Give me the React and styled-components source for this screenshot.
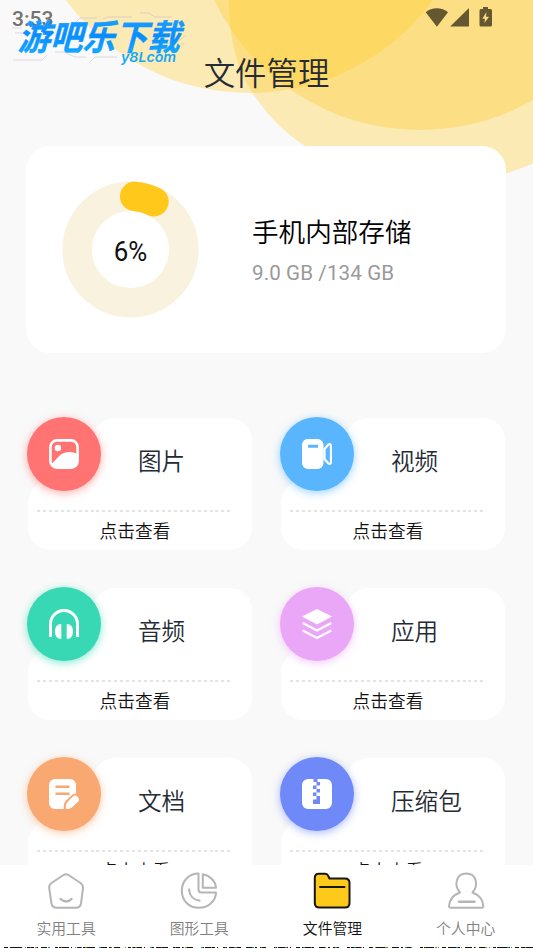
import React from "react";
import styled, { createGlobalStyle } from "styled-components";

const Global = createGlobalStyle`
  * { box-sizing: border-box; }
  body { margin: 0; background: #f9f9f9; }
`;

const cjk = `"Noto Sans CJK SC", "Noto Sans", sans-serif`;

const Screen = styled.div`
  position: relative;
  width: 533px;
  height: 948px;
  display: flex;
  flex-direction: column;
  overflow: hidden;
  background: #f9f9f9;
  font-family: Roboto, ${cjk};
`;

const Backdrop = styled.svg`
  position: absolute;
  top: 0;
  left: 0;
`;

const StatusBar = styled.header`
  position: relative;
  height: 36px;
  flex: none;
  display: flex;
  justify-content: space-between;
  padding: 0 40px 0 12px;
`;

const Clock = styled.span`
  font-size: 21px;
  font-weight: 500;
  line-height: 38px;
  color: #747371;
`;

const Watermark = styled.svg`
  position: absolute;
  top: 0;
  left: 0;
`;

const Title = styled.h1`
  position: relative;
  margin: 0;
  height: 110px;
  flex: none;
  font: 350 31.4px/72px ${cjk};
  text-align: center;
  color: #252b35;
`;

const StorageCard = styled.section`
  position: relative;
  flex: none;
  display: flex;
  align-items: flex-start;
  margin: 0 27px 0 26px;
  height: 207px;
  padding: 35px 0 0 35.5px;
  border-radius: 24px;
  background: #fff;
`;

const StorageText = styled.div`
  display: flex;
  flex-direction: column;
  padding: 30px 0 0 53.5px;
`;

const StorageName = styled.span`
  font: 350 26.6px/40px ${cjk};
  color: #000;
`;

const StorageSize = styled.span`
  font-size: 20.6px;
  line-height: 44px;
  letter-spacing: 0.1px;
  color: #999;
`;

const Scroll = styled.main`
  position: relative;
  flex: 1;
  min-height: 0;
  overflow: hidden;
`;

const Categories = styled.div`
  display: grid;
  grid-template-columns: 225px 225px;
  column-gap: 28px;
  row-gap: 37px;
  padding: 64px 0 0 27px;
`;

const Category = styled.article`
  position: relative;
  height: 133px;
  padding: 1px 0 0 1px;
`;

const CardHead = styled.div`
  height: 62px;
  margin-left: 65px;
  padding-left: 45px;
  border-radius: 22px 22px 0 0;
  background: #fff;
  font: 350 23.6px/85px ${cjk};
  color: #252b35;
`;

const CardBody = styled.div`
  height: 70px;
  padding: 29.5px 21px 0 9px;
  border-radius: 23px 0 22px 22px;
  background: #fff;
`;

const Dots = styled.div`
  height: 2px;
  background: repeating-linear-gradient(90deg, #e4e4e4 0 3px, transparent 3px 5.95px);
`;

const Hint = styled.div`
  padding-left: 2px;
  font: 350 17.7px/37px ${cjk};
  text-align: center;
  color: #111;
`;

const Disc = styled.div`
  position: absolute;
  left: -0.3px;
  top: 0;
  width: 74px;
  height: 74px;
  display: grid;
  place-items: center;
  border-radius: 50%;
  background: ${(p) => p.$color};
  box-shadow: 0 2px 8px ${(p) => p.$color}99;
`;

const Nav = styled.nav`
  position: relative;
  flex: none;
  height: 83px;
  display: grid;
  grid-template-columns: repeat(4, 133.2px);
  background: #fff;
`;

const NavItem = styled.div`
  display: flex;
  flex-direction: column;
  align-items: center;
  padding: 7px 1px 0 0;
  font: 350 14.8px/22px ${cjk};
  color: ${(p) => (p.$active ? "#111" : "#808080")};
  svg { display: block; margin-bottom: 7px; }
`;

const StaticEdge = styled.svg`
  position: absolute;
  left: 0;
  bottom: 0;
`;

const W = "#fff";

const categories = [
  {
    name: "图片",
    color: "#ff7472",
    icon: (
      <>
        <rect x="1.4" y="1.4" width="27.2" height="27.2" rx="6.5" fill="none" stroke={W} strokeWidth="2.6" />
        <circle cx="8.9" cy="9" r="3.2" fill={W} />
        <path d="M2.5 25C7 22 10 13 20 13C24 13 27 14 29 15.5V23C29 27 27 29 22 29H8C4.500 29 2.500 28 2.500 25Z" fill={W} />
      </>
    ),
  },
  {
    name: "视频",
    color: "#59b6fe",
    icon: (
      <>
        <path d="M7 0H15.500A6 6 0 0 1 21.500 6V24A6 6 0 0 1 15.500 30H6A6 6 0 0 1 0 24V6A6 6 0 0 1 7 0Z" fill={W} />
        <rect x="6" y="5.800" width="10" height="3" rx=".6" fill="#59b6fe" />
        <path d="M22.500 10L26 6C27.500 4.500 29 5 29 7V23C29 25 27.500 25.500 26 24L22.500 20Z" fill="none" stroke={W} strokeWidth="2.2" />
      </>
    ),
  },
  {
    name: "音频",
    color: "#37d8b3",
    icon: (
      <>
        <path d="M1.500 28V15A13.500 13.500 0 0 1 28.500 15V28" fill="none" stroke={W} strokeWidth="3" />
        <path d="M12.300 15V30C8 30 6 27 6 22.500C6 18 8 15 12.300 15ZM17.700 15V30C22 30 24 27 24 22.500C24 18 22 15 17.700 15Z" fill={W} />
      </>
    ),
  },
  {
    name: "应用",
    color: "#eaa7f8",
    icon: (
      <>
        <path d="M15 0L30 7.500L15 15.500L0 7.500Z" fill={W} />
        <path d="M.7 14L15 21.500L29.300 14M.7 21.500L15 29L29.300 21.500" fill="none" stroke={W} strokeWidth="2.2" />
      </>
    ),
  },
  {
    name: "文档",
    color: "#f9a872",
    icon: (
      <>
        <rect width="27" height="30" rx="6" fill={W} />
        <path d="M6.500 7.700H20.500M6.500 14.700H20.500" stroke="#f9a872" strokeWidth="2.4" />
        <path d="M14.800 31C14.500 26 15 23.500 17 21.500L23.500 15.500Q25 14.500 28 14.500V31Z" fill="#f9a872" />
        <path d="M17 30C16.500 27 17 24.500 19 22.500L23.500 18C25.500 16 27 16.200 28.500 17.800C30.500 20 30.500 21.500 28.800 23L24 27.500C22 29.500 20 30 17 30Z" fill={W} />
      </>
    ),
  },
  {
    name: "压缩包",
    color: "#6f89f8",
    icon: (
      <>
        <path d="M6 0H11.500V3H15.500V0H24A6 6 0 0 1 30 6V24A6 6 0 0 1 24 30H6A6 6 0 0 1 0 24V6A6 6 0 0 1 6 0Z" fill={W} />
        <path d="M14.500 3H18V6.500H14.500ZM11 6.500H14.500V10H11ZM14.500 10H18V13.500H14.500ZM11 13.500H14.500V17H11ZM14.500 17H18V25H11V20.500H14.500Z" fill="#6f89f8" />
      </>
    ),
  },
];

const navItems = [
  {
    name: "实用工具",
    icon: (
      <>
        <path d="M16.500 3Q19 1.600 21.500 3L33.500 11Q36.300 13 36 16L34 31.500Q33.300 35.700 29 35.700H9.500Q5.300 35.700 4.500 31.500L2.200 16Q1.800 13 4.500 11Z" />
        <path d="M13.500 27C17 30.300 21.500 30.300 24.500 27" strokeWidth="2.4" />
      </>
    ),
  },
  {
    name: "图形工具",
    icon: (
      <>
        <path d="M18.500 1.500C9 1.500 1.800 9 1.800 18.700C1.800 28.500 9 35.800 18.800 35.800C28.500 35.800 36 28.500 36 20.500H21.500Q18.500 20.500 18.500 17.500Z" />
        <path d="M22.800 2.300C30 3.500 35.500 9 36 15.800H22.800Z" />
        <path d="M9 17.500C9.500 23.500 13.500 28 19.500 28.700" strokeWidth="2.200" />
      </>
    ),
  },
  {
    name: "文件管理",
    active: true,
    icon: (
      <>
        <path d="M1.800 6Q1.800 1.700 5.800 1.700H12Q14 1.700 15 3.500L16.500 6.500H32Q36.500 6.500 36.500 11V31Q36.500 35.500 32 35.500H6.500Q1.800 35.500 1.800 31Z" fill="#ffc91a" />
        <path d="M7 15H31.500" />
      </>
    ),
  },
  {
    name: "个人中心",
    icon: (
      <>
        <path d="M13 20.500C6 23 2.500 28 2 34Q1.900 35.700 4 35.700H34.500Q36.500 35.700 36.300 34C36 28 32 23 25.500 20.500C31.500 14 30 1.500 19.300 1.500C8.500 1.500 7 14 13 20.500Z" />
        <path d="M12 29.700H27.500" strokeWidth="2.400" />
      </>
    ),
  },
];

const StatusIcons = () => (
  <svg width="68" height="30" fill="#65572f">
    <path d="M.7 12.300C6.500 6.800 17 6.800 23 12.300L11.900 26.700Z" />
    <path d="M25.200 26.500L44 8V26.500Z" />
    <path d="M58 7H63V9H65.500Q67 9 67 10.500V25Q67 26.500 65.500 26.500H56Q54.500 26.500 54.500 25V10.500Q54.500 9 56 9H58Z" />
    <path d="M61.500 12L57.300 18.700H60L59.500 23L64 16.800H61Z" fill="#fbdd83" />
  </svg>
);

const Brand = () => (
  <Watermark width="200" height="72">
    <defs>
      <linearGradient id="brand" x1="0" y1="0" x2="0" y2="1">
        <stop offset="0" stopColor="#25adff" />
        <stop offset=".5" stopColor="#088cff" />
        <stop offset="1" stopColor="#13b8ff" />
      </linearGradient>
    </defs>
    <g fill="none" stroke="#b9b5cd" strokeOpacity=".7" strokeWidth=".7">
      <path d="M76 22L80 18H97M103 19L107 17H132M140 13H149L155 17H172M13 60H42L47 55M55 52H64L75 57H86M22 28H12M15 33H26M90 62L95 57H117M171 47L185 36M181 44H184" />
    </g>
    <g transform="translate(27 -1.500) skewX(-15)" fontFamily='"Noto Sans CJK SC", sans-serif' fontWeight="700">
      <text x="4.500" y="52" fontSize="35" textLength="162" lengthAdjust="spacingAndGlyphs" fill="url(#brand)" stroke="#0c93ff" strokeWidth=".4">游吧乐下载</text>
    </g>
    <text x="121" y="61.500" fontSize="13.500" fontWeight="600" fontStyle="italic" fontFamily="Inter, sans-serif" textLength="55" lengthAdjust="spacingAndGlyphs" fill="#13a8f8">y8Lcom</text>
  </Watermark>
);

export default function App() {
  return (
    <Screen>
      <Global />
      <Backdrop width="533" height="200" fill="#ffc81a" fillOpacity=".31">
        <circle cx="249.500" cy="-135" r="228" />
        <circle cx="420" cy="-98" r="228" />
        <path d="M229 0C229 34 235 66 252.700 93C267 115 284 132 305 146C360 185 445 196 507 173C516 170 525 167 533 163.600V0Z" />
      </Backdrop>
      <StatusBar>
        <Clock>3:53</Clock>
        <StatusIcons />
        <Brand />
      </StatusBar>
      <Title>文件管理</Title>
      <StorageCard>
        <svg width="137" height="137" viewBox="0 0 137 137">
          <circle cx="68.500" cy="68.500" r="53.300" fill="none" stroke="#f8f2df" strokeWidth="29.500" />
          <circle cx="68.500" cy="68.500" r="53.300" fill="none" stroke="#ffc81a" strokeWidth="29.500" strokeLinecap="round" pathLength="100" strokeDasharray="6 94" transform="rotate(-85.500 68.500 68.500)" />
          <text x="68.500" y="79.500" textAnchor="middle" fontFamily="Roboto, sans-serif" fontSize="27" textLength="33.500" lengthAdjust="spacingAndGlyphs" fill="#111">6%</text>
        </svg>
        <StorageText>
          <StorageName>手机内部存储</StorageName>
          <StorageSize>9.0 GB /134 GB</StorageSize>
        </StorageText>
      </StorageCard>
      <Scroll>
        <Categories>
          {categories.map((c) => (
            <Category key={c.name}>
              <CardHead>{c.name}</CardHead>
              <CardBody>
                <Dots />
                <Hint>点击查看</Hint>
              </CardBody>
              <Disc $color={c.color}>
                <svg width="30" height="30" viewBox="0 0 30 30">{c.icon}</svg>
              </Disc>
            </Category>
          ))}
        </Categories>
      </Scroll>
      <Nav>
        {navItems.map((n) => (
          <NavItem key={n.name} $active={n.active}>
            <svg width="38" height="38" viewBox="0 0 38 38" fill="none" stroke={n.active ? "#171717" : "#b5b5b5"} strokeWidth="2" strokeLinecap="round" strokeLinejoin="round">
              {n.icon}
            </svg>
            {n.name}
          </NavItem>
        ))}
      </Nav>
      <StaticEdge width="533" height="1">
        <path d="M4 .5H533" stroke="#111" strokeDasharray="4 2 12 5 7 2 2 3 6 8 3 1 10 2 1 5" />
        <path d="M25 .5H533" stroke="#a66d24" strokeDasharray="1 9 2 24 1 13" />
        <path d="M30 .5H533" stroke="#2b77c5" strokeDasharray="1 17 2 31" />
      </StaticEdge>
    </Screen>
  );
}
